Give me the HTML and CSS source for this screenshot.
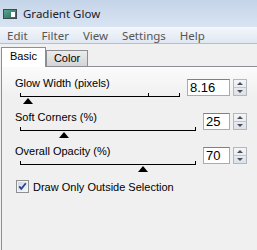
FILE: index.html
```html
<!DOCTYPE html>
<html lang="en">
<head>
<meta charset="UTF-8">
<title>Gradient Glow</title>
<link rel="stylesheet" href="styles.css">
</head>
<body>
    <div class="titlebar">
        <svg class="app-icon" width="14" height="10" viewBox="0 0 14 10">
            <defs>
                <linearGradient id="ig" x1="0" y1="0" x2="1" y2="1">
                    <stop offset="0" stop-color="#5fa89a"/>
                    <stop offset="1" stop-color="#1f6b4a"/>
                </linearGradient>
            </defs>
            <rect x="0.5" y="0.5" width="13" height="9" fill="url(#ig)" stroke="#3c4a52"/>
            <rect x="8" y="3" width="4" height="5" fill="#ffffff"/>
        </svg>
        <span class="title">Gradient Glow</span>
    </div>
    <div class="menubar">
        <span>Edit</span>
        <span>Filter</span>
        <span>View</span>
        <span>Settings</span>
        <span>Help</span>
    </div>
    <div class="tabs">
        <div class="tab active">Basic</div>
        <div class="tab">Color</div>
    </div>
    <div class="panel">
        <div class="setting">
            <div class="control">
                <div class="label">Glow Width (pixels)</div>
                <div class="track">
                    <span class="tick" style="left: 80%"></span>
                    <span class="thumb" style="left: 5%"></span>
                </div>
            </div>
            <div class="num wide">8.16</div>
            <div class="spin"><span class="up"></span><span class="down"></span></div>
        </div>
        <div class="setting">
            <div class="control">
                <div class="label">Soft Corners (%)</div>
                <div class="track">
                    <span class="thumb" style="left: 25%"></span>
                </div>
            </div>
            <div class="num">25</div>
            <div class="spin"><span class="up"></span><span class="down"></span></div>
        </div>
        <div class="setting">
            <div class="control">
                <div class="label">Overall Opacity (%)</div>
                <div class="track">
                    <span class="thumb" style="left: 70%"></span>
                </div>
            </div>
            <div class="num">70</div>
            <div class="spin"><span class="up"></span><span class="down"></span></div>
        </div>
        <div class="check-row">
            <svg class="checkbox" width="13" height="13" viewBox="0 0 13 13">
                <defs>
                    <linearGradient id="cg" x1="0" y1="0" x2="1" y2="1">
                        <stop offset="0" stop-color="#cfd6e2"/>
                        <stop offset="1" stop-color="#f4f6f9"/>
                    </linearGradient>
                </defs>
                <rect x="0.5" y="0.5" width="12" height="12" fill="#f4f4f4" stroke="#8e8f8f"/>
                <rect x="2" y="2" width="9" height="9" fill="url(#cg)"/>
                <path d="M3.2 6.4 L5.3 8.8 L9.8 3.2" fill="none" stroke="#27438f" stroke-width="1.8"/>
            </svg>
            <span>Draw Only Outside Selection</span>
        </div>
    </div>
</body>
</html>
```

FILE: styles.css
```css
/* window */
body {
    margin: 0;
    width: 257px;
    height: 250px;
    overflow: hidden;
    display: flex;
    flex-direction: column;
    background-color: #f0f0f0;
    font-family: "Liberation Sans", Arial, sans-serif;
}

.titlebar {
    height: 27px;
    display: flex;
    align-items: center;
    padding-left: 3px;
    background: linear-gradient(#c4d4e8, #d9e4f2);
}

.app-icon {
    margin-right: 6px;
}

.title {
    font-family: "Noto Sans", sans-serif;
    font-size: 11.5px;
    color: #222;
}

.menubar {
    height: 16px;
    display: flex;
    align-items: center;
    border-bottom: 1px solid #b9bfc8;
    background: linear-gradient(#f4f7fb, #dfe7f2);
    font-family: "Noto Sans", sans-serif;
    font-size: 11.5px;
    color: #555;
}

.menubar span {
    padding: 0 7px;
}

/* tabs */
.tabs {
    display: flex;
    align-items: flex-end;
    height: 19px;
    padding: 3px 0 0 1px;
}

.tab {
    height: 15px;
    padding: 0 7px;
    border: 1px solid #8c8e94;
    border-bottom: none;
    background: linear-gradient(#ececec, #d4d4d4);
    font-size: 11px;
    line-height: 15px;
    color: #000;
}

.tab.active {
    position: relative;
    height: 19px;
    margin-bottom: -1px;
    padding: 0 8px;
    background: #fff;
    line-height: 17px;
}

/* panel */
.panel {
    flex: 1;
    margin-left: 1px;
    padding: 10px 10px 0 13px;
    border-top: 1px solid #8c8e94;
    border-left: 1px solid #8c8e94;
    background: linear-gradient(#fbfbfb, #f0f0f0 30px);
    font-size: 11px;
    color: #000;
}

.setting {
    display: flex;
    align-items: flex-start;
    height: 33px;
    margin-bottom: 1px;
}

.control {
    flex: 1;
}

.label {
    height: 13px;
    line-height: 13px;
}

/* slider: line, end ticks and thumb */
.track {
    position: relative;
    height: 20px;
    margin-left: 5px;
    background:
        linear-gradient(#000, #000) left 3px / 1px 4px no-repeat,
        linear-gradient(#000, #000) right 3px / 1px 4px no-repeat,
        linear-gradient(#000, #000) left 6px / 100% 1px no-repeat;
}

.tick {
    position: absolute;
    top: 3px;
    width: 1px;
    height: 4px;
    background: #000;
}

.thumb {
    position: absolute;
    top: 8px;
    margin-left: -5px;
    width: 0;
    height: 0;
    border-left: 5px solid transparent;
    border-right: 5px solid transparent;
    border-bottom: 6px solid #000;
}

/* number box + spinner */
.num {
    width: 23px;
    height: 15px;
    margin: 2px 0 0 7px;
    padding-left: 2px;
    border: 1px solid #a9abb0;
    border-top-color: #7e8085;
    background: #fff;
    font-family: "Liberation Sans Narrow", "Liberation Sans", sans-serif;
    font-size: 13px;
    line-height: 15px;
}

.num.wide {
    width: 39px;
}

.spin {
    display: flex;
    flex-direction: column;
    width: 12px;
    height: 15px;
    margin: 2px 0 0 3px;
    border: 1px solid #b3b7be;
    background: linear-gradient(#f3f5f8, #dde2e9);
}

.spin span {
    flex: 1;
    display: flex;
    justify-content: center;
    align-items: center;
}

.spin .up {
    border-bottom: 1px solid #c3c7cd;
}

.spin .up::before,
.spin .down::before {
    content: "";
    width: 0;
    height: 0;
    border-left: 3px solid transparent;
    border-right: 3px solid transparent;
}

.spin .up::before {
    border-bottom: 3px solid #4a4f57;
}

.spin .down::before {
    border-top: 3px solid #4a4f57;
}

.check-row {
    display: flex;
    align-items: center;
    gap: 4px;
    height: 13px;
    margin: 2px 0 0 1px;
}
```
